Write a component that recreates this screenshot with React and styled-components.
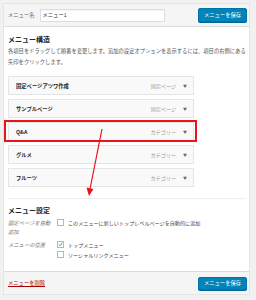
import React from 'react';
import styled, { createGlobalStyle } from 'styled-components';

const Global = createGlobalStyle`
  body {
    margin: 0;
    background: #f1f1f1;
    font-family: "Noto Sans CJK JP", "Noto Sans", sans-serif;
    color: #23282d;
  }
`;

const Frame = styled.div`
  position: relative;
  width: 247px;
  margin: 3px 0 0 3px;
  border: 1px solid #e5e5e5;
  box-sizing: border-box;
`;

const Bar = styled.div`
  height: ${p => p.h}px;
  padding: 0 2px 0 4px;
  background: #f5f5f5;
  display: flex;
  align-items: center;
  justify-content: space-between;
  border-${p => p.side}: 1px solid #dcdcdc;
`;

const NameGroup = styled.div`
  display: flex;
  align-items: center;
  gap: 5px;
`;

const Small = styled.span`
  font-size: 5.3px;
  color: #666;
`;

const NameInput = styled.div`
  width: 121px;
  height: 11px;
  border: 1px solid #ddd;
  background: #fff;
  display: flex;
  align-items: center;
  padding-left: 2px;
  font-size: 5.3px;
  color: #32373c;
  box-shadow: inset 0 1px 1px rgba(0,0,0,0.05);
`;

const SaveButton = styled.div`
  width: 49px;
  height: ${p => p.h}px;
  box-sizing: border-box;
  background: #0085ba;
  border: 1px solid #0073aa;
  border-radius: 2px;
  color: #fff;
  font-size: 5.3px;
  display: flex;
  align-items: center;
  justify-content: center;
  box-shadow: 0 1px 0 #006799;
`;

const Body = styled.div`
  background: #fff;
  padding: 0 1px 0 4px;
  display: flex;
  flex-direction: column;
`;

const Heading = styled.div`
  font-size: 7px;
  font-weight: bold;
  line-height: 10px;
  margin-top: ${p => p.top}px;
`;

const Desc = styled.div`
  font-size: 5.3px;
  line-height: 11px;
  color: #555;
  margin-top: 2px;
`;

const List = styled.div`
  margin-top: 8px;
  width: 186px;
  display: flex;
  flex-direction: column;
  gap: 4px;
`;

const Item = styled.div`
  position: relative;
  height: 19px;
  box-sizing: border-box;
  border: 1px solid #e5e5e5;
  background: #f9f9f9;
  display: flex;
  align-items: center;
  padding: 0 6px 0 7px;
`;

const ItemTitle = styled.span`
  flex: 1;
  font-size: 5.3px;
  font-weight: bold;
  color: #23282d;
`;

const ItemType = styled.span`
  font-size: 5.1px;
  color: #999;
`;

const Caret = styled.span`
  font-size: 4px;
  color: #666;
  margin-left: 7px;
`;

const Highlight = styled.div`
  position: absolute;
  left: -5px;
  right: -4px;
  top: -3px;
  bottom: -2px;
  border: 2px solid #e8141c;
`;

const Divider = styled.div`
  height: 1px;
  background: #eee;
  margin: 11px 3px 0 0;
`;

const SettingRow = styled.div`
  display: flex;
  margin-top: ${p => p.top}px;
`;

const RowLabel = styled.div`
  width: 46px;
  margin-right: 3px;
  font-size: 5.3px;
  line-height: 9px;
  font-style: italic;
  color: #777;
`;

const Options = styled.div`
  display: flex;
  flex-direction: column;
  gap: 3px;
`;

const Option = styled.div`
  display: flex;
  align-items: center;
  gap: 4px;
  font-size: 5.1px;
  color: #444;
`;

const Box = styled.div`
  width: 7px;
  height: 7px;
  box-sizing: border-box;
  border: 1px solid #b4b9be;
  background: #fff;
  display: flex;
  align-items: center;
  justify-content: center;
`;

const DeleteLink = styled.span`
  font-size: 5.3px;
  color: #a00;
  text-decoration: underline;
`;

const Arrow = styled.svg`
  position: absolute;
  left: -3px;
  top: -3px;
  pointer-events: none;
`;

const items = [
  ['固定ページアツワ作成', '固定ページ'],
  ['サンプルページ', '固定ページ'],
  ['Q&A', 'カテゴリー', true],
  ['グルメ', 'カテゴリー'],
  ['フルーツ', 'カテゴリー'],
];

const Check = ({ on }) => (
  <Box>
    {on && (
      <svg width="7" height="7" viewBox="0 0 7 7">
        <path d="M1.2 3.6 L2.8 5.2 L5.8 1" stroke="#1e8cbe" strokeWidth="1.2" fill="none" />
      </svg>
    )}
  </Box>
);

export default function App() {
  return (
    <>
      <Global />
      <Frame>
        <Bar h={22} side="bottom">
          <NameGroup>
            <Small>メニュー名</Small>
            <NameInput>メニュー1</NameInput>
          </NameGroup>
          <SaveButton h={14}>メニューを保存</SaveButton>
        </Bar>
        <Body>
          <Heading top={7}>メニュー構造</Heading>
          <Desc>
            各項目をドラッグして順番を変更します。追加の設定オプションを表示するには、項目の右側にある矢印をクリックします。
          </Desc>
          <List>
            {items.map(([title, type, hl]) => (
              <Item key={title}>
                <ItemTitle>{title}</ItemTitle>
                <ItemType>{type}</ItemType>
                <Caret>▼</Caret>
                {hl && <Highlight />}
              </Item>
            ))}
          </List>
          <Divider />
          <Heading top={6}>メニュー設定</Heading>
          <SettingRow top={4}>
            <RowLabel>固定ページを自動追加</RowLabel>
            <Options>
              <Option>
                <Check />
                このメニューに新しいトップレベルページを自動的に追加
              </Option>
            </Options>
          </SettingRow>
          <SettingRow top={4}>
            <RowLabel>メニューの位置</RowLabel>
            <Options>
              <Option>
                <Check on />
                トップメニュー
              </Option>
              <Option>
                <Check />
                ソーシャルリンクメニュー
              </Option>
            </Options>
          </SettingRow>
          <div style={{ height: 13 }} />
        </Body>
        <Bar h={22} side="top">
          <DeleteLink>メニューを削除</DeleteLink>
          <SaveButton h={13}>メニューを保存</SaveButton>
        </Bar>
        <Arrow width="256" height="300" viewBox="0 0 256 300">
          <line x1="101" y1="128" x2="89" y2="188" stroke="#e8141c" strokeWidth="1.2" />
          <polygon points="85.5,186.5 92.5,188 88,195" fill="#e8141c" />
        </Arrow>
      </Frame>
    </>
  );
}
